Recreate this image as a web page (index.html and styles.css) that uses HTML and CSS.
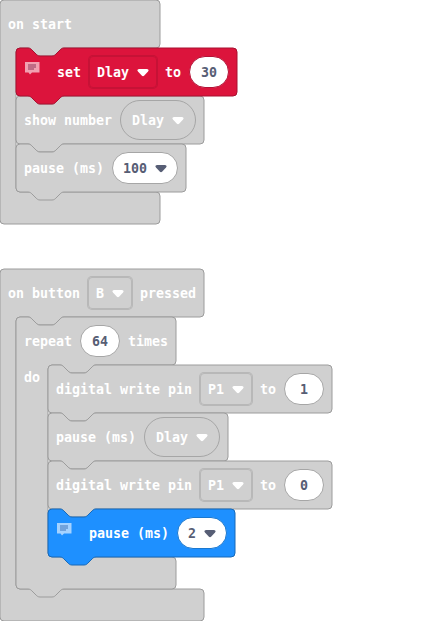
FILE: index.html
```
<!DOCTYPE html>
<html lang="en">
<head>
<meta charset="utf-8">
<title>Blocks</title>
<link rel="stylesheet" href="styles.css">
</head>
<body>
<main class="workspace" id="workspace"></main>
<script src="blocks.js"></script>
</body>
</html>
```
FILE: styles.css
```
body {
  margin: 0;
  background: #fff;
  font: bold 13.3px/16px "DejaVu Sans Mono", monospace;
  color: #fff;
}
.workspace {
  display: flex;
  flex-direction: column;
  align-items: flex-start;
  gap: 45px;
  width: 436px;
  height: 621px;
  overflow: hidden;
}
.block {
  --edge: #a6a6a6;
  --soft: rgba(145, 145, 145, .38);
  position: relative;
  z-index: 0;
}
.block.active { z-index: 1; }
.block.red { --edge: #b41236; --soft: rgba(165, 15, 45, .4); --ink: #bf6c86; }
.block.blue { --edge: #1b78cf; --soft: rgba(20, 100, 180, .4); --ink: #72a3dc; }
.shape {
  position: absolute;
  left: 0;
  top: 0;
  width: 1px;
  height: 1px;
  overflow: visible;
  z-index: -1;
  fill: #d0d0d0;
  stroke: #9c9c9c;
}
.red > .shape { fill: #dc143c; stroke: #a81030; }
.blue > .shape { fill: #1e90ff; stroke: #1669b8; }
.row {
  display: flex;
  align-items: center;
  gap: 8px;
  height: 48px;
  padding-left: 8px;
  white-space: pre;
  box-sizing: border-box;
}
.body {
  display: flex;
  padding-left: 16px;
}
.body.labelled { padding-left: 8px; }
.label {
  width: 24px;
  padding-top: 5px;
}
.foot { height: 32px; }
.text { width: max-content; padding-top: 2px; }
.field {
  display: flex;
  align-items: center;
  justify-content: center;
  gap: 8px;
  height: 32px;
  padding-top: 1px;
  box-sizing: border-box;
  border: 1px solid var(--edge);
}
.field .text { padding-top: 1px; }
.menu {
  border-color: var(--soft);
  border-radius: 4px;
  box-shadow: 0 0 0 1px var(--soft);
  padding-left: 7px;
  padding-right: 7px;
}
.variable { height: 40px; border-radius: 20px; padding-left: 11px; padding-right: 11px; }
.value {
  min-width: 40px;
  border-radius: 16px;
  padding-left: 10px;
  padding-right: 10px;
  background: #fff;
  color: #575e75;
}
.arrow { width: 12px; height: 8px; fill: currentColor; }
.comment { width: 17px; height: 16px; margin-right: 8px; margin-top: -8px; }
.comment .bubble { fill: #fff; fill-opacity: .6; }
.comment .ink { fill: var(--ink); }
```
FILE: blocks.js
```
const NOTCH = 'H12c2 0 3 1 4 2l4 4c1 1 2 2 4 2h12c2 0 3-1 4-2l4-4c1-1 2-2 4-2';
const TAB = 'H48c-2 0-3 1-4 2l-4 4c-1 1-2 2-4 2h-12c-2 0-3-1-4-2l-4-4c-1-1-2-2-4-2';
const shape = d => `<svg class="shape"><path d="${d}"/></svg>`;

// Outline of a one-row statement
const statement = w =>
  `M0 4a4 4 0 0 1 4-4${NOTCH}H${w - 4}a4 4 0 0 1 4 4V44a4 4 0 0 1-4 4${TAB}H4a4 4 0 0 1-4-4z`;

// Outline of a block that wraps other statements
function wrapper(w, footWidth, innerX, innerH, nested) {
  const bottom = 48 + innerH;
  const n = innerX;
  return `M0 4a4 4 0 0 1 4-4${nested ? NOTCH : ''}H${w - 4}a4 4 0 0 1 4 4V44a4 4 0 0 1-4 4` +
    `H${n + 48}c-2 0-3 1-4 2l-4 4c-1 1-2 2-4 2h-12c-2 0-3-1-4-2l-4-4c-1-1-2-2-4-2H${n + 4}` +
    `a4 4 0 0 0-4 4V${bottom - 4}a4 4 0 0 0 4 4H${footWidth - 4}a4 4 0 0 1 4 4v24a4 4 0 0 1-4 4` +
    `${nested ? TAB : ''}H4a4 4 0 0 1-4-4z`;
}

const ARROW = '<svg class="arrow" viewBox="0 0 12 8"><path d="M2 0H10Q12.6.4 11 2.5L7.3 6.6Q6 8 4.7 6.6L1 2.5Q-.6.4 2 0z"/></svg>';
const COMMENT = '<svg class="comment" viewBox="0 0 17 16"><path class="bubble" d="M1 2H15.500V12.500H8L6 14.500L4.500 12.500H1z"/><path class="ink" d="M4 4H12V8H10V10H4z"/></svg>';
const text = s => `<span class="text">${s}</span>`;
const field = (kind, s, arrow) => `<span class="field ${kind}">${text(s)}${arrow ? ARROW : ''}</span>`;
const menu = s => field('menu', s, true);
const variable = s => field('variable', s, true);
const value = (s, arrow) => field('value', s, arrow);

const block = (w, parts, color) =>
  `<div class="block ${color ? 'active ' + color : ''}">${shape(statement(w))}<div class="row">${parts.join('')}</div></div>`;
const digitalWrite = level =>
  block(284, [text('digital write pin'), menu('P1'), text('to'), value(level)]);

const onStart = `<section class="block">${shape(wrapper(160, 160, 16, 144, false))}
  <div class="row">${text('on start')}</div>
  <div class="body"><div>
    ${block(221, [COMMENT, text('set'), menu('Dlay'), text('to'), value('30')], 'red')}
    ${block(188, [text('show number'), variable('Dlay')])}
    ${block(170, [text('pause (ms)'), value('100', true)])}
  </div></div>
  <div class="foot"></div>
</section>`;

const repeat = `<div class="block">${shape(wrapper(160, 160, 32, 192, true))}
  <div class="row">${text('repeat')}${value('64')}${text('times')}</div>
  <div class="body labelled"><div class="label">do</div><div>
    ${digitalWrite('1')}
    ${block(180, [text('pause (ms)'), variable('Dlay')])}
    ${digitalWrite('0')}
    ${block(187, [COMMENT, text('pause (ms)'), value('2', true)], 'blue')}
  </div></div>
  <div class="foot"></div>
</div>`;

const onButton = `<section class="block">${shape(wrapper(204, 204, 16, 272, false))}
  <div class="row">${text('on button')}${menu('B')}${text('pressed')}</div>
  <div class="body">${repeat}</div>
  <div class="foot"></div>
</section>`;

document.getElementById('workspace').innerHTML = onStart + onButton;
```
